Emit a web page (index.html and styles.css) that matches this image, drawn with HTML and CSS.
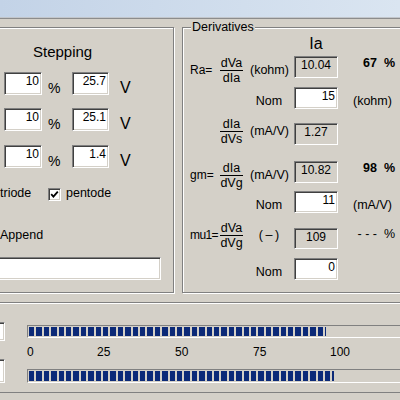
FILE: index.html
```html
<!DOCTYPE html>
<html lang="en">
<head>
    <meta charset="UTF-8">
    <meta name="viewport" content="width=device-width, initial-scale=1.0">
    <title>Tube Derivatives</title>
    <link rel="stylesheet" href="styles.css">
</head>
<body>
<div class="desktop"></div>
<div class="window">
    <div class="groups">
        <div class="group stepping">
            <div class="title">Stepping</div>
            <div class="step-row first">
                <span class="edit pct-edit">10</span><span class="pct-sign">%</span>
                <span class="edit volt-edit">25.7</span><span class="volt-sign">V</span>
            </div>
            <div class="step-row second">
                <span class="edit pct-edit">10</span><span class="pct-sign">%</span>
                <span class="edit volt-edit">25.1</span><span class="volt-sign">V</span>
            </div>
            <div class="step-row third">
                <span class="edit pct-edit">10</span><span class="pct-sign">%</span>
                <span class="edit volt-edit">1.4</span><span class="volt-sign">V</span>
            </div>
            <div class="check-row">
                <span class="triode">triode</span>
                <span class="chk"><svg width="9" height="9" viewBox="0 0 9 9"><path d="M1.2 4.2 L3.4 6.6 L7.8 1.6" fill="none" stroke="#000" stroke-width="1.8"/></svg></span>
                <span class="pentode">pentode</span>
            </div>
            <div class="append">Append</div>
            <div class="edit file-edit"></div>
        </div>

        <div class="group derivs">
            <span class="legend">Derivatives</span>
            <div class="drow head"><span class="ia">Ia</span></div>
            <div class="drow ra">
                <span class="lbl">Ra=</span>
                <span class="frac"><span class="num">dVa</span><span class="den">dIa</span></span>
                <span class="unit">(kohm)</span>
                <span class="edit ro box">10.04</span>
                <span class="pct">67 &nbsp;%</span>
            </div>
            <div class="drow nom">
                <span class="unit">Nom</span>
                <span class="edit box">15</span>
                <span class="runit">(kohm)</span>
            </div>
            <div class="drow gs">
                <span class="lbl"></span>
                <span class="frac"><span class="num">dIa</span><span class="den">dVs</span></span>
                <span class="unit">(mA/V)</span>
                <span class="edit ro box lower">1.27</span>
            </div>
            <div class="drow gm">
                <span class="lbl">gm=</span>
                <span class="frac"><span class="num">dIa</span><span class="den">dVg</span></span>
                <span class="unit">(mA/V)</span>
                <span class="edit ro box">10.82</span>
                <span class="pct">98 &nbsp;%</span>
            </div>
            <div class="drow nom">
                <span class="unit">Nom</span>
                <span class="edit box">11</span>
                <span class="runit">(mA/V)</span>
            </div>
            <div class="drow mu">
                <span class="lbl narrow">mu1=</span>
                <span class="frac"><span class="num">dVa</span><span class="den">dVg</span></span>
                <span class="unit">(&thinsp;&ndash;&thinsp;)</span>
                <span class="edit ro box lower">109</span>
                <span class="pct none">- - - &nbsp;%</span>
            </div>
            <div class="drow nom">
                <span class="unit">Nom</span>
                <span class="edit box">0</span>
            </div>
        </div>
    </div>

    <div class="group meters">
        <div class="meter-row">
            <span class="edit small"></span>
            <div class="bar"><div class="fill" style="width: 297px"></div></div>
        </div>
        <div class="scale"><span>0</span><span>25</span><span>50</span><span>75</span><span>100</span></div>
        <div class="meter-row second">
            <span class="edit small"></span>
            <div class="bar"><div class="fill" style="width: 305px"></div></div>
        </div>
    </div>
</div>
</body>
</html>
```

FILE: styles.css
```css
html, body {
    margin: 0;
    overflow: hidden;
}
body {
    background-color: #d4d0c8;
    font-family: 'Liberation Sans', Arial, sans-serif;
    font-size: 12.5px;
    line-height: 15px;
    color: #000;
}
.desktop {
    height: 17px;
    background: linear-gradient(to right, #c3d3e7, #dae5f1);
    border-bottom: 1px solid #c2c6cb;
}
.window {
    border-top: 1px solid #8c8c8c;
    padding-top: 8px;
}
.groups {
    display: flex;
    height: 266px;
}
.group {
    box-sizing: border-box;
    border: 1px solid #808080;
    box-shadow: inset 1px 1px 0 #fff, 1px 1px 0 #fff;
}
.edit {
    box-sizing: border-box;
    display: block;
    border: 1px solid;
    border-color: #808080 #fff #fff #808080;
    box-shadow: inset 1px 1px 0 #404040, inset -1px -1px 0 #d4d0c8;
    background: #fff;
    font-size: 12px;
    line-height: 17px;
    text-align: right;
    padding: 0 2px;
    flex: none;
}
.edit.ro {
    background: #d4d0c8;
    text-align: center;
}

/* stepping group */
.stepping {
    flex: none;
    width: 204px;
    margin-left: -30px;
}
.title {
    font-size: 15px;
    line-height: 17px;
    margin: 15px 0 0 62px;
}
.step-row {
    display: flex;
    align-items: flex-start;
    height: 23px;
    margin-left: 33px;
}
.step-row.first { margin-top: 12px; }
.step-row.second { margin-top: 13px; }
.step-row.third { margin-top: 14px; }
.step-row .edit { height: 23px; }
.pct-edit { width: 38px; }
.volt-edit { width: 37px; }
.pct-sign {
    width: 24px;
    padding-left: 6px;
    font-size: 14px;
    line-height: 17px;
    margin-top: 8px;
}
.volt-sign {
    margin-left: 11px;
    font-size: 16px;
    line-height: 18px;
    margin-top: 7px;
}
.check-row {
    display: flex;
    align-items: flex-start;
    margin: 18px 0 0 29px;
}
.triode { width: 48px; }
.chk {
    box-sizing: border-box;
    width: 13px;
    height: 13px;
    margin-top: 2px;
    display: flex;
    align-items: center;
    justify-content: center;
    background: #fff;
    border: 1px solid;
    border-color: #808080 #fff #fff #808080;
    box-shadow: inset 1px 1px 0 #404040, inset -1px -1px 0 #d4d0c8;
}
.pentode { margin-left: 5px; }
.append { margin: 27px 0 0 29px; }
.file-edit {
    width: 180px;
    height: 23px;
    margin: 14px 0 0 10px;
}

/* derivatives group */
.derivs {
    flex: none;
    width: 240px;
    margin-left: 8px;
    padding-top: 7px;
    position: relative;
}
.legend {
    position: absolute;
    left: 8px;
    top: -8px;
    padding: 0 1px;
    background: #d4d0c8;
}
.drow {
    display: flex;
    align-items: flex-start;
    padding-left: 7px;
    height: 30px;
}
.drow.head { height: 21px; padding-left: 111px; }
.drow.ra { height: 31px; }
.drow.gs { height: 44px; }
.drow.mu { height: 37px; }
.drow.nom { padding-left: 60px; }
.ia {
    width: 44px;
    text-align: center;
    font-size: 16px;
    line-height: 18px;
}
.lbl {
    width: 30px;
    flex: none;
    font-size: 12px;
    margin-top: 7px;
    white-space: nowrap;
}
.lbl.narrow {
    letter-spacing: -0.6px;
}
.frac {
    width: 23px;
    flex: none;
    display: flex;
    flex-direction: column;
    text-align: center;
    line-height: 14px;
}
.num { border-bottom: 1px solid #000; }
.unit {
    width: 38px;
    flex: none;
    margin-left: 7px;
    margin-top: 7px;
    text-align: center;
    white-space: nowrap;
}
.box {
    width: 44px;
    height: 22px;
    margin-left: 6px;
}
.box.lower { margin-top: 6px; }
.drow.mu .box.lower { margin-top: 7px; height: 21px; }
.runit {
    margin-left: 15px;
    margin-top: 7px;
}
.pct {
    width: 42px;
    margin-left: 15px;
    text-align: right;
    font-weight: bold;
    white-space: nowrap;
}
.pct.none {
    font-weight: normal;
    margin-top: 6px;
}

/* meters group */
.meters {
    width: 430px;
    margin: 9px 0 0 -10px;
    padding: 19px 0 9px;
}
.meter-row {
    display: flex;
    align-items: flex-start;
    height: 19px;
}
.meter-row.second { height: 24px; }
.small {
    width: 24px;
    height: 19px;
    margin-left: -10px;
}
.second .small { height: 24px; }
.bar {
    box-sizing: border-box;
    flex: 1;
    height: 13px;
    margin: 3px 0 0 22px;
    padding: 1px;
    border: 1px solid;
    border-color: #808080 #fff #fff #808080;
}
.second .bar {
    height: 14px;
    margin-top: 10px;
}
.fill {
    height: 100%;
    background: repeating-linear-gradient(to right, #0c2a78 0 5.4px, transparent 5.4px 7.4px);
}
.scale {
    display: flex;
    height: 13px;
    margin-top: 5px;
    padding-left: 36px;
    font-size: 12px;
    line-height: 13px;
}
.scale span:nth-child(1) { width: 70px; }
.scale span:nth-child(2),
.scale span:nth-child(3) { width: 78px; }
.scale span:nth-child(4) { width: 77px; }
```
